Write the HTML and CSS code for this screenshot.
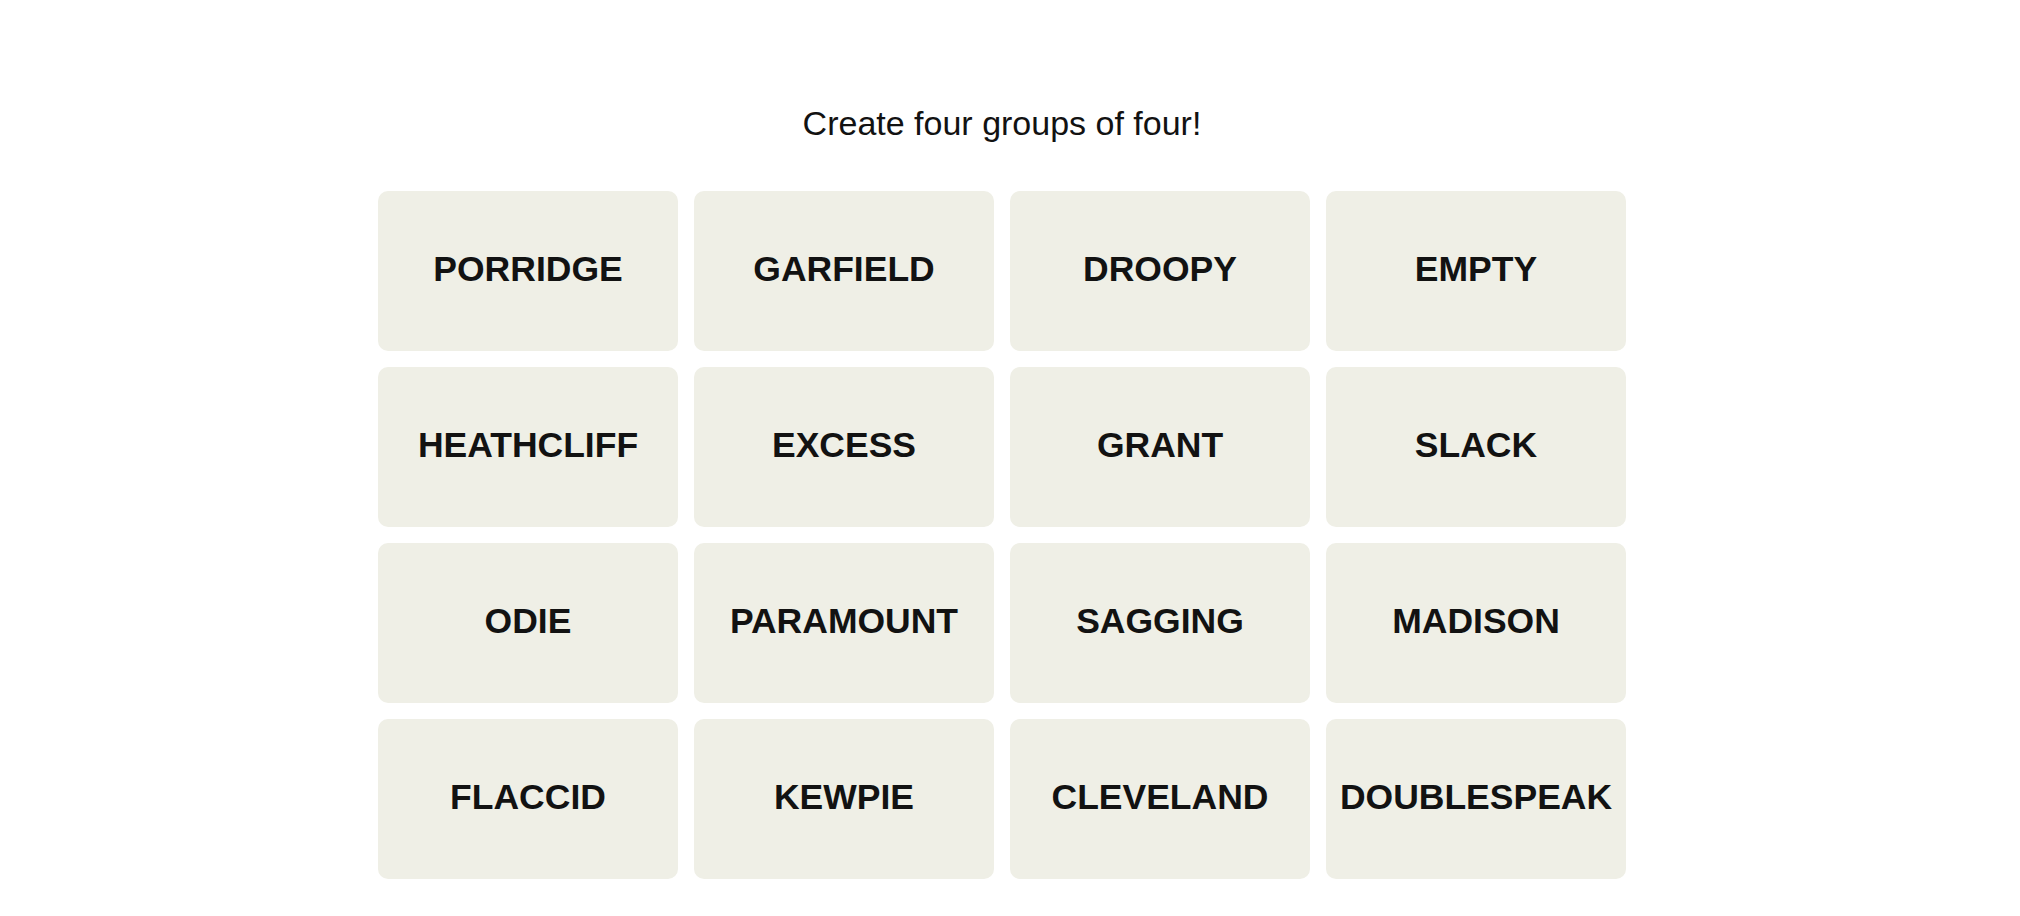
FILE: index.html
```html
<!DOCTYPE html>
<html lang="en">
<head>
<meta charset="utf-8">
<title>Connections</title>
<link rel="stylesheet" href="styles.css">
</head>
<body>
<main class="game">
  <h2 class="prompt">Create four groups of four!</h2>
  <div class="board">
    <button class="tile">PORRIDGE</button>
    <button class="tile">GARFIELD</button>
    <button class="tile">DROOPY</button>
    <button class="tile">EMPTY</button>
    <button class="tile">HEATHCLIFF</button>
    <button class="tile">EXCESS</button>
    <button class="tile">GRANT</button>
    <button class="tile">SLACK</button>
    <button class="tile">ODIE</button>
    <button class="tile">PARAMOUNT</button>
    <button class="tile">SAGGING</button>
    <button class="tile">MADISON</button>
    <button class="tile">FLACCID</button>
    <button class="tile">KEWPIE</button>
    <button class="tile">CLEVELAND</button>
    <button class="tile">DOUBLESPEAK</button>
  </div>
</main>
</body>
</html>
```

FILE: styles.css
```css
html, body {
  margin: 0;
  padding: 0;
  background: #ffffff;
}

body {
  padding-right: 16px;
  font-family: "Liberation Sans", Arial, sans-serif;
  color: #121212;
}

.game {
  display: flex;
  flex-direction: column;
  align-items: center;
  padding-top: 103px;
}

.prompt {
  margin: 0 0 48px 0;
  font-size: 34px;
  line-height: 40px;
  font-weight: 400;
  color: #121212;
}

.board {
  display: grid;
  grid-template-columns: repeat(4, 300px);
  grid-auto-rows: 160px;
  gap: 16px;
}

.tile {
  display: flex;
  align-items: center;
  justify-content: center;
  border: none;
  margin: 0;
  padding: 0 0 3px 0;
  background: #efefe6;
  border-radius: 10px;
  font-family: "Liberation Sans", Arial, sans-serif;
  font-weight: 700;
  font-size: 35.5px;
  color: #121212;
  text-transform: uppercase;
  cursor: pointer;
}
```
